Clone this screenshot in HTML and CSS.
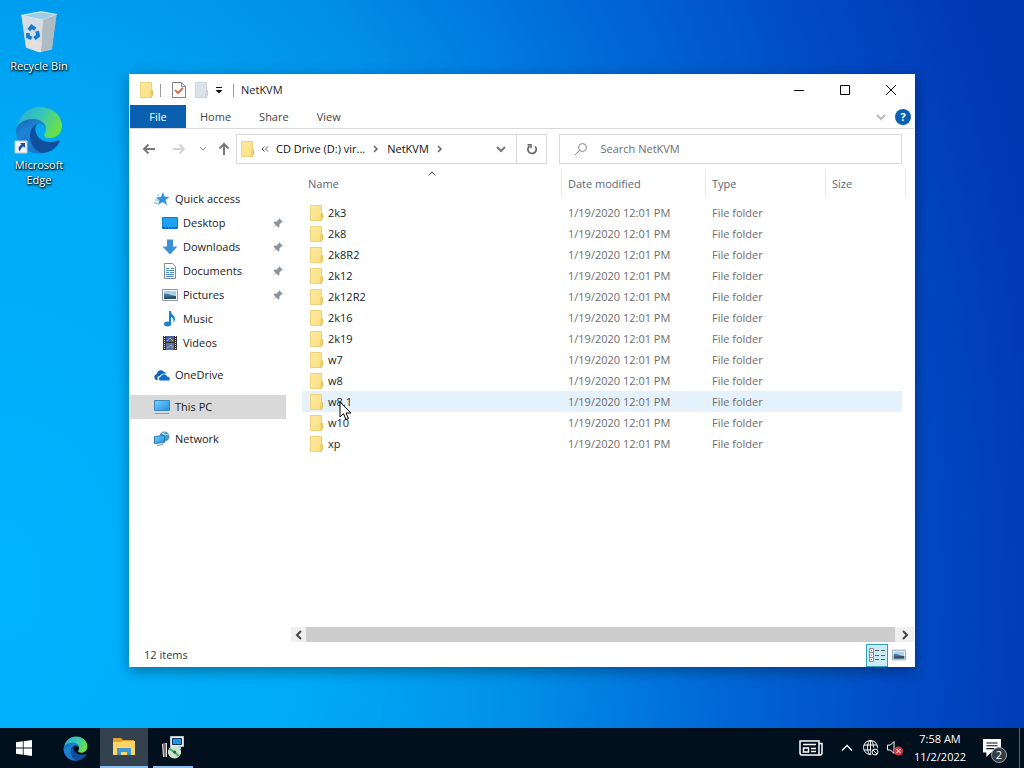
FILE: index.html
```
<!DOCTYPE html>
<html lang="en">
<head>
  <meta charset="UTF-8" />
  <meta name="viewport" content="width=device-width,initial-scale=1" />
  <title>NetKVM</title>
  <link rel="stylesheet" href="styles.css">
</head>
<body>
  <!-- shared icons -->
  <svg class="defs" aria-hidden="true">
    <defs>
      <linearGradient id="edge-top" x1="0" y1="0" x2="1" y2="0.4"><stop offset="0" stop-color="#2aa9d8"/><stop offset=".55" stop-color="#35c6b8"/><stop offset="1" stop-color="#68e04c"/></linearGradient>
      <linearGradient id="edge-left" x1="0" y1="0" x2="0.5" y2="1"><stop offset="0" stop-color="#1a5fae"/><stop offset=".4" stop-color="#1b83d4"/><stop offset="1" stop-color="#1878d0"/></linearGradient>
      <linearGradient id="fold" x1="0" y1="0" x2="1" y2="1"><stop offset="0" stop-color="#ffe9a0"/><stop offset="1" stop-color="#fbdf80"/></linearGradient>
      <linearGradient id="scr" x1="0" y1="0" x2="1" y2="1"><stop offset="0" stop-color="#7fd0fa"/><stop offset="1" stop-color="#1a8fe0"/></linearGradient>
      <linearGradient id="bin" x1="0" y1="0" x2="1" y2="0"><stop offset="0" stop-color="#d3dde3"/><stop offset=".6" stop-color="#e6e9ea"/><stop offset="1" stop-color="#a9b4ba"/></linearGradient>
    </defs>
    <symbol id="i-folder" viewBox="0 0 14 16">
      <path d="M1.500.5h11v15h-11z" fill="url(#fold)" stroke="#eed27a"/>
      <path d="M12.500 8.500h1v5l-1.500 2v-6z" fill="#fbe08a" stroke="#e3c25c"/>
    </symbol>
    <symbol id="i-edge" viewBox="0 0 48 48">
      <path d="M2 22C4 9 13 1 25 1c13 0 22 9 22 19 0 8-6 12-12 12-4 0-6-1-6-3 0-1 2-2 2-6 0-5-5-9-12-9-8 0-14 4-17 8z" fill="url(#edge-top)"/>
      <path d="M1 25c0-6 7-12 17-12 7 0 13 4 13 10-1-3-4-5-7-5-6 0-9 6-9 12 0 8 6 15 14 17-2 .5-4 .5-6 .5C11 47 1 38 1 25z" fill="url(#edge-left)"/>
      <path d="M15 30c0-6 3-11 7-12-2 3-2 6-1 9 2 6 8 9 14 9 4 0 7-1 9-2 1 0 1 1 .5 2C41 43 34 47 27 47c-7-2-12-9-12-17z" fill="#104f9c"/>
    </symbol>
    <symbol id="i-pin" viewBox="0 0 12 12">
      <path d="M7 1l4 4-1.500.3-2 2.200-.2 2.500-1 .5-2.400-2.300L.8 11.200 3.500 7.800 1.500 5.700l.6-1 2.500-.2L6.800 2.500z" fill="#8b949a"/>
    </symbol>
    <symbol id="i-right" viewBox="0 0 8 10"><path d="M2 2l3 3-3 3" fill="none" stroke="#666" stroke-width="1.500"/></symbol>
    <symbol id="i-down" viewBox="0 0 12 10"><path d="M2 3l4 4 4-4" fill="none" stroke="currentColor" stroke-width="2"/></symbol>
    <symbol id="i-picture" viewBox="0 0 16 16">
      <path d="M.5 2.500h15v11H.5z" fill="#fff" stroke="#8c99a5"/><path d="M2 4h12v8H2z" fill="#a6d2f3"/>
      <path d="M2 7c4-1 7 2 12 2v3H2z" fill="#4d7390"/><path d="M2 10l12-1v3H2z" fill="#2d4e68"/>
    </symbol>
  </svg>

  <main id="desktop">
    <div class="shortcuts">
      <a href="#" class="shortcut">
        <svg width="48" height="48" viewBox="-1 -2 50 52">
          <path d="M5 6l22-4 16 3-5 38-14 3-14-5z" fill="url(#bin)"/>
          <path d="M5 6l21-4 17 3-15 6z" fill="#9fcbe4" stroke="#e5f2f8"/>
          <path d="M28 11l15-6-5 37-12 4z" fill="#aebbc2"/>
          <path d="M5 6l23 5-2 35-16-6z" fill="#d3dde3"/>
          <path d="M9 31l18 4-1 11-16-6z" fill="#e4dfdc"/>
          <g fill="none" stroke="#147bd1" stroke-width="4"><path d="M13 22l3-4 4 3M22 23l1 5-4 3M16 31l-4-2 0-4"/></g>
        </svg>
        <span>Recycle Bin</span>
      </a>
      <a href="#" class="shortcut">
        <svg width="50" height="50" viewBox="0 0 50 50">
          <use href="#i-edge" x="1" y="1" width="48" height="48"/>
          <path d="M1 36h12v12H1z" fill="#f4f7fa" stroke="#bcc8d2"/>
          <path d="M6 38h5v5l-1.500-1.500C7 43 6.500 44 6 46.500 3.500 44 4.500 41.500 7.500 39.500z" fill="#1d4fa0"/>
        </svg>
        <span>Microsoft Edge</span>
      </a>
    </div>

    <section class="window">
      <header class="titlebar">
        <svg class="folder" width="14" height="16"><use href="#i-folder"/></svg>
        <i class="sep"></i>
        <button type="button" class="quick" aria-label="Properties">
          <svg width="14" height="16" viewBox="0 0 14 16"><path d="M.5.5h9l4 4v11H.5z" fill="#fff" stroke="#7d8388"/><path d="M9.500.5v4h4" fill="none" stroke="#7d8388"/><path d="M3 8l3 3 5-5" fill="none" stroke="#d8744a" stroke-width="2"/></svg>
        </button>
        <button type="button" class="quick" aria-label="New folder">
          <svg width="14" height="16" viewBox="0 0 14 16"><path d="M1.500.5h11v15h-11z" fill="#dbe2ec" stroke="#cdd5df"/><path d="M12.500 8.500h1v5l-1.500 2v-6z" fill="#e0e6ee" stroke="#c3ccd8"/></svg>
        </button>
        <button type="button" class="quick-menu" aria-label="Customize">
          <svg width="8" height="8" viewBox="0 0 8 8"><path d="M1 1.500h6" stroke="#111"/><path d="M.5 4h7L4 7.500z" fill="#111"/></svg>
        </button>
        <i class="sep"></i>
        <h1>NetKVM</h1>
        <div class="controls">
          <button type="button" aria-label="Minimize"><svg width="10" height="10" viewBox="0 0 10 10"><path d="M0 5.500h10"/></svg></button>
          <button type="button" aria-label="Maximize"><svg width="10" height="10" viewBox="0 0 10 10"><path d="M.5.5h9v9h-9z"/></svg></button>
          <button type="button" aria-label="Close"><svg width="10" height="10" viewBox="0 0 10 10"><path d="M0 0l10 10M10 0L0 10"/></svg></button>
        </div>
      </header>

      <nav class="ribbon">
        <button type="button" class="file">File</button>
        <button type="button">Home</button>
        <button type="button">Share</button>
        <button type="button">View</button>
        <div class="ribbon-right">
          <button type="button" class="expand" aria-label="Expand ribbon"><svg width="12" height="10"><use href="#i-down"/></svg></button>
          <button type="button" class="help" aria-label="Help">?</button>
        </div>
      </nav>

      <div class="address-row">
        <div class="nav">
          <button type="button" aria-label="Back"><svg width="14" height="12" viewBox="0 0 14 12"><path d="M13 6H2M6.500 1.500L2 6l4.500 4.500" stroke="#777"/></svg></button>
          <button type="button" aria-label="Forward"><svg width="14" height="12" viewBox="0 0 14 12"><path d="M1 6h11M7.500 1.500L12 6l-4.500 4.500" stroke="#d4d4d4"/></svg></button>
          <button type="button" class="recent" aria-label="Recent"><svg width="8" height="8" viewBox="0 0 8 8"><path d="M1 2l3 3 3-3" stroke="#888"/></svg></button>
          <button type="button" class="up" aria-label="Up"><svg width="12" height="14" viewBox="0 0 12 14"><path d="M6 13V2M1.500 6.500L6 2l4.500 4.500" stroke="#777"/></svg></button>
        </div>
        <div class="address">
          <svg class="folder" width="14" height="16"><use href="#i-folder"/></svg>
          <svg width="8" height="8" viewBox="0 0 8 8"><path d="M3.500 1.500L1 4l2.500 2.500M7 1.500L4.500 4 7 6.500" fill="none" stroke="#555"/></svg>
          <a href="#">CD Drive (D:) vir...</a>
          <svg width="8" height="10"><use href="#i-right"/></svg>
          <a href="#">NetKVM</a>
          <svg width="8" height="10"><use href="#i-right"/></svg>
          <button type="button" class="history" aria-label="Previous locations"><svg width="12" height="10"><use href="#i-down"/></svg></button>
          <button type="button" class="refresh" aria-label="Refresh"><svg width="12" height="12" viewBox="0 0 12 12"><path d="M9.200 3.500A4.200 4.200 0 1 1 3.500 3" fill="none" stroke="#666" stroke-width="1.700"/><path d="M1.500 1.800h3.500v3.500" fill="none" stroke="#666" stroke-width="1.500"/></svg></button>
        </div>
        <label class="search">
          <svg width="14" height="14" viewBox="0 0 14 14"><circle cx="8.500" cy="5.500" r="4" fill="none" stroke="#888"/><path d="M5.500 8.500L1 13" stroke="#888"/></svg>
          <input type="text" placeholder="Search NetKVM" aria-label="Search NetKVM">
        </label>
      </div>

      <div class="content">
        <nav class="tree">
          <a href="#"><svg width="16" height="16" viewBox="0 0 16 16"><path d="M9 1l1.500 4.500 5 .5-4 3 1.500 5-4.500-3-4.500 3 1.500-4.500L2 6.500 7 6z" fill="#2b93e0"/><path d="M1 9h4M0 12h4M3 4h2" stroke="#5aaee8"/></svg>Quick access</a>
          <a href="#" class="sub"><svg width="16" height="16" viewBox="0 0 16 16"><path d="M.5 2.500h15v11H.5z" fill="#1ea0f5" stroke="#1679c4"/><path d="M1 12.500h14" stroke="#0b5c9c" stroke-dasharray="2 1"/></svg>Desktop<svg class="pin" width="12" height="12"><use href="#i-pin"/></svg></a>
          <a href="#" class="sub"><svg width="16" height="16" viewBox="0 0 16 16"><path d="M5 .5h6v7h4.500L8 15.500.5 7.500H5z" fill="#3c8fd6"/></svg>Downloads<svg class="pin" width="12" height="12"><use href="#i-pin"/></svg></a>
          <a href="#" class="sub"><svg width="16" height="16" viewBox="0 0 16 16"><path d="M2.500.5h8l3 3v12h-11z" fill="#fff" stroke="#7e8b96"/><path d="M4 5.500h3M9 5.500h3M4 7.500h8M4 9.500h3M8 9.500h4M4 11.500h8M4 13.500h8" stroke="#4b8fc4"/></svg>Documents<svg class="pin" width="12" height="12"><use href="#i-pin"/></svg></a>
          <a href="#" class="sub"><svg width="16" height="16"><use href="#i-picture"/></svg>Pictures<svg class="pin" width="12" height="12"><use href="#i-pin"/></svg></a>
          <a href="#" class="sub"><svg width="16" height="16" viewBox="0 0 16 16"><ellipse cx="5.500" cy="13" rx="3.500" ry="2.500" fill="#1583d8"/><path d="M7 0h2c0 4 4 4 4 8 0 2-1 3-1.500 3.500C12 8 10.500 6.500 9 6v7H7z" fill="#1583d8"/></svg>Music</a>
          <a href="#" class="sub"><svg width="16" height="16" viewBox="0 0 16 16"><path d="M1 1h14v14H1z" fill="#333"/><path d="M4 1h8v6H4z" fill="#4460a8"/><path d="M4 8h8v7H4z" fill="#5a6fae"/><path d="M5 6l3-3 3 3M5 13l4-3 2 3" stroke="#c6b45a" fill="none"/><path d="M2.500 1v14M13.500 1v14" stroke="#ddd" stroke-dasharray="1 1"/></svg>Videos</a>
          <a href="#" class="root"><svg width="16" height="16" viewBox="0 0 16 16"><path d="M1 12C-1 9 2 7 3 7c0-4 5-5 7-2 1 0 2 .5 2 1.500C8 6 6 8 6 9c-3 0-3 3-2 4H2z" fill="#0c64c0"/><path d="M6 13.500c-2-1-1-4 1-4 1-3 5-3 6 0 3 0 3.500 3 2 4z" fill="#0c6fd0"/></svg>OneDrive</a>
          <a href="#" class="root selected" aria-current="page"><svg width="16" height="16" viewBox="0 0 16 16"><path d="M.5 1.500h15v10H.5z" fill="url(#scr)" stroke="#3a86ba"/><path d="M1 14.500h14" stroke="#8a9aa5"/></svg>This PC</a>
          <a href="#" class="root"><svg width="16" height="16" viewBox="0 0 16 16"><circle cx="10.500" cy="5.500" r="5" fill="#4b98c8"/><path d="M8 2l3 2 4-1M10 1v8" stroke="#b7dff0" fill="none"/><path d="M.5 5.500l10-1v7l-10 1z" fill="url(#scr)" stroke="#2c7ab2"/><path d="M3 14.500l6-1" stroke="#708c9d"/></svg>Network</a>
        </nav>

        <div class="files">
          <table>
            <colgroup><col><col class="c-date"><col class="c-type"><col class="c-size"></colgroup>
            <thead>
              <tr><th>Name<svg class="sort" width="8" height="6" viewBox="0 0 8 6"><path d="M.5 4.500L4 1l3.500 3.500" fill="none" stroke="#555"/></svg></th><th>Date modified</th><th>Type</th><th>Size</th></tr>
            </thead>
            <tbody id="rows"></tbody>
          </table>
          <div class="scrollbar">
            <button type="button" aria-label="Scroll left"><svg width="8" height="10" viewBox="0 0 8 10"><path d="M6 1L2 5l4 4"/></svg></button>
            <div class="thumb"></div>
            <button type="button" aria-label="Scroll right"><svg width="8" height="10" viewBox="0 0 8 10"><path d="M2 1l4 4-4 4"/></svg></button>
          </div>
        </div>
      </div>

      <footer class="status">
        <span>12 items</span>
        <button type="button" class="view active" aria-label="Details"><svg width="18" height="16" viewBox="0 0 18 16"><path d="M1.500 1.500h4v13h-4zM1.500 5.500h4M1.500 10.500h4" fill="#fff" stroke="#8d8896"/><path d="M3 3.500h1M3 8h1M3 12.500h1" stroke="#2d6ea8"/><path d="M7 3.500h4M13 3.500h4M7 8.500h4M13 8.500h4M7 12.500h4M13 12.500h4" stroke="#55606c"/></svg></button>
        <button type="button" class="view" aria-label="Large icons"><svg width="14" height="14"><use href="#i-picture"/></svg></button>
      </footer>
    </section>

    <svg class="cursor" width="13" height="20" viewBox="0 0 13 20"><path d="M1 1v15l3.500-3.300L7 18.500l2.500-1-2.500-5.500h5z" fill="#fff" stroke="#000"/></svg>
  </main>

  <footer id="taskbar">
    <button type="button" aria-label="Start"><svg width="16" height="16" viewBox="0 0 16 16"><path d="M0 2.300L6.800 1.300v6.300H0zM7.600 1.200L16 0v7.600H7.600zM0 8.400h6.800v6.300L0 13.700zM7.600 8.400H16V16l-8.400-1.200z" fill="#fff"/></svg></button>
    <button type="button" class="edge" aria-label="Microsoft Edge"><svg width="25" height="25"><use href="#i-edge"/></svg></button>
    <button type="button" class="open active" aria-label="File Explorer">
      <svg width="22" height="20" viewBox="0 0 22 20"><path d="M0 1h8l2 2h11v5H0z" fill="#e3a02a"/><path d="M0 5h8l2-1h12v14H0z" fill="#ffd567"/><path d="M4 18v-7h14v7h-4v-3H8v3z" fill="#3a98d4"/></svg>
    </button>
    <button type="button" class="open installer" aria-label="Setup">
      <svg width="24" height="24" viewBox="0 0 24 24"><path d="M1 9l5-1v14H2z" fill="#e8e4e0"/><path d="M2 9h3v13H3z" fill="#7c6f70"/><path d="M9.500 1.500h13v10h-13z" fill="#e8eef2" stroke="#bcc8d0"/><path d="M11.500 3.500h9v6h-9z" fill="#2094dc" stroke="#0b2f66"/><path d="M13 12h7v2h-7z" fill="#b8c4cc"/><circle cx="13.500" cy="17" r="6" fill="#c4e6cb" stroke="#eaf3ee"/><path d="M13.500 17l-5-3M13.500 17l4 4" stroke="#4fa570" stroke-width="2"/><circle cx="13.500" cy="17" r="1.500" fill="#24544a"/></svg>
    </button>
    <div class="tray">
      <button type="button" class="news" aria-label="News"><svg width="24" height="16" viewBox="0 0 24 16"><path d="M1 1h19v14H3a2 2 0 0 1-2-2zM20 3.500h3V13a2 2 0 0 1-2 2h-1M4 4.500h13M4.500 8h5v4h-5zM12 8.500h5M12 11.500h5" fill="none" stroke="#fff" stroke-width="1.500"/></svg></button>
      <button type="button" class="small" aria-label="Show hidden icons"><svg width="12" height="8" viewBox="0 0 12 8"><path d="M1 6.500l5-5 5 5" fill="none" stroke="#fff" stroke-width="1.300"/></svg></button>
      <button type="button" class="small" aria-label="Network"><svg width="16" height="16" viewBox="0 0 16 16"><g fill="none" stroke="#fff"><circle cx="7.500" cy="7.500" r="7"/><ellipse cx="7.500" cy="7.500" rx="3" ry="7"/><path d="M1 5h13M1 10h13M7.500 0v15"/></g><circle cx="12" cy="12" r="4.500" fill="#020f1c"/><circle cx="12" cy="12" r="3" fill="none" stroke="#fff"/><path d="M10 10l4 4" stroke="#fff"/></svg></button>
      <button type="button" class="small" aria-label="Volume"><svg width="16" height="16" viewBox="0 0 16 16"><path d="M.5 5h3L7 1.500v12L3.500 10h-3z" fill="none" stroke="#fff"/><circle cx="11.500" cy="11" r="4.500" fill="#d43840"/><path d="M9.500 9l4 4M13.500 9l-4 4" stroke="#fff"/></svg></button>
      <div class="clock"><time>7:58 AM</time><time>11/2/2022</time></div>
      <button type="button" class="notify" aria-label="Notifications"><svg width="18" height="18" viewBox="0 0 16 16"><path d="M0 0h16v12H7l-4 4v-4H0z" fill="#fff"/><path d="M3 3.500h10M3 6h10M3 8.500h7" stroke="#020f1c"/></svg><span class="badge">2</span></button>
      <button type="button" class="show-desktop" aria-label="Show desktop"></button>
    </div>
  </footer>

  <script>
    const folders = ['2k3','2k8','2k8R2','2k12','2k12R2','2k16','2k19','w7','w8','w8.1','w10','xp'];
    const hovered = 'w8.1';
    document.getElementById('rows').innerHTML = folders.map(name => `
      <tr${name === hovered ? ' class="hover"' : ''}>
        <td><div class="name"><svg width="14" height="16"><use href="#i-folder"/></svg>${name}</div></td>
        <td>1/19/2020 12:01 PM</td><td>File folder</td><td></td>
      </tr>`).join('');
  </script>
</body>
</html>
```
FILE: styles.css
```
:root {
  --text:#1b1b1b;--muted:#6d6d6d;--line:#d9d9d9;--file:#0a5fb0;--hover:#e5f1fb;--taskbar:#020f1c;
}
* {margin:0;padding:0;box-sizing:border-box}
body {
  height:100vh;display:flex;flex-direction:column;overflow:hidden;
  font:11px/16px "Open Sans", "Noto Sans", sans-serif;color:var(--text);
}
button,input {font:inherit;color:inherit;border:none;background:none}
button {display:flex;align-items:center;justify-content:center}
a {color:inherit;text-decoration:none}
svg {display:block;flex-shrink:0}
.defs {position:absolute;width:0;height:0}

#desktop {
  flex:1;min-height:0;position:relative;
  background:radial-gradient(ellipse 104% 200% at 0% 80%, #00b4ff 0%, #00aaf6 30%, #0092ea 48%, #0068d6 68%, #004cc6 84%, #0038b2 100%);
}
.shortcuts {display:flex;flex-direction:column;gap:32px;padding-top:8px;width:78px}
.shortcut {
  display:flex;flex-direction:column;align-items:center;gap:2px;text-align:center;
  line-height:15px;color:#fff;text-shadow:0 1px 2px #000, 1px 1px 2px #000
}
.shortcut span {max-width:64px}

/* explorer window */
.window {
  position:absolute;left:129px;right:109px;top:74px;bottom:61px;
  display:flex;flex-direction:column;background:#fff;border:1px solid #f3f9fd;border-bottom:none;
  box-shadow:0 4px 14px rgba(0,0,0,.35);
}
.titlebar {display:flex;align-items:center;height:30px;padding-left:9px;flex-shrink:0}
.sep {width:1px;height:13px;background:#999;margin:0 7px}
.quick {width:22px;height:22px}
.quick-menu {width:14px;height:22px}
.titlebar h1 {font-size:11px;font-weight:400}
.controls {display:flex;margin-left:auto}
.controls button {width:46px;height:30px}
.controls path {fill:none;stroke:#000}

.ribbon {display:flex;height:24px;border-bottom:1px solid var(--line);flex-shrink:0;color:#444}
.ribbon > button {padding:0 14px}
.ribbon .file {width:56px;background:var(--file);color:#fff}
.ribbon-right {display:flex;align-items:center;gap:8px;margin-left:auto;padding-right:3px}
.expand {color:#bbb}
.help {width:16px;height:16px;border-radius:50%;background:var(--file);color:#fff;font-weight:700}

.address-row {display:flex;align-items:center;height:40px;padding:0 12px 0 4px;flex-shrink:0}
.nav {display:flex;width:102px}
.nav button {width:30px;height:28px}
.nav .recent {width:18px}
.nav .up {width:24px}
.nav path {fill:none;stroke-width:2}
.nav .recent path {stroke-width:1}
.address {
  flex:306 1 0;display:flex;align-items:center;gap:7px;height:30px;padding-left:3px;
  border:1px solid var(--line);min-width:0;white-space:nowrap;color:#111
}
.history {margin-left:auto;width:16px;height:28px;color:#777}
.refresh {width:30px;height:28px;border-left:1px solid var(--line)}
.search {
  flex:326 1 0;display:flex;align-items:center;gap:12px;height:30px;padding-left:14px;
  margin-left:12px;border:1px solid var(--line);min-width:0
}
.search input {flex:1;min-width:0;outline:none}
.search input::placeholder {color:var(--muted)}

.content {flex:1;display:flex;min-height:0}
.tree {width:156px;padding-top:18px;flex-shrink:0}
.tree a {display:flex;align-items:center;gap:5px;height:24px;padding-left:24px}
.tree .sub {padding-left:32px}
.tree .root {margin-top:8px}
.tree .selected {background:#d9d9d9}
.pin {margin:0 2px 0 auto}

.files {flex:1;display:flex;flex-direction:column;min-width:0;padding-left:5px}
table {table-layout:fixed;border-collapse:separate;border-spacing:0;width:calc(100% - 19px);margin-left:11px}
.c-date {width:144px}
.c-type {width:120px}
.c-size {width:80px}
th {
  height:28px;padding:2px 6px 0;font-weight:400;text-align:left;color:#5b6673;
  border-right:1px solid #e8e8e8;position:relative
}
.sort {position:absolute;left:50%;top:2px;margin-left:-4px}
tbody::before {content:"";display:block;height:5px}
td {height:21px;padding:0 6px;color:var(--muted)}
td:first-child {padding-left:7px}
td:last-child {border-right:4px solid transparent;background-clip:padding-box}
.name {display:flex;align-items:center;gap:5px;color:var(--text)}
.hover td {background-color:var(--hover)}

.scrollbar {display:flex;height:15px;margin-top:auto;margin-bottom:1px;background:#f0f0f0}
.scrollbar button {width:15px}
.scrollbar button:last-child {width:19px}
.scrollbar path {fill:none;stroke:#444;stroke-width:2}
.thumb {flex:1;background:#cdcdcd}

.status {display:flex;align-items:center;height:24px;padding:0 4px 0 14px;flex-shrink:0;color:#2e3a46}
.status span {margin-right:auto}
.view {width:22px;height:23px}
.view.active {background:#cdeaf7;border:1px solid #2ba3bd}

.cursor {position:absolute;left:339px;top:401px}

#taskbar {display:flex;height:40px;flex-shrink:0;background:var(--taskbar);color:#fff}
#taskbar > button {width:48px}
#taskbar .edge {margin:0 1px 0 3px}
.open {border-bottom:2px solid #86bdec}
.open.active {background:#33424e}
#taskbar .installer {width:40px;margin-left:5px}
.tray {display:flex;align-items:center;margin-left:auto}
.news {width:48px;height:40px}
.small {width:24px;height:40px}
.clock {display:flex;flex-direction:column;text-align:center;line-height:18px;width:66px}
.notify {position:relative;width:38px;height:40px;margin-right:8px}
.badge {
  position:absolute;left:18px;top:19px;width:16px;height:16px;border-radius:50%;
  background:#343d46;border:1px solid #9aa3ab;line-height:14px
}
.show-desktop {width:5px;height:40px;border-left:1px solid #5b6670}
```
